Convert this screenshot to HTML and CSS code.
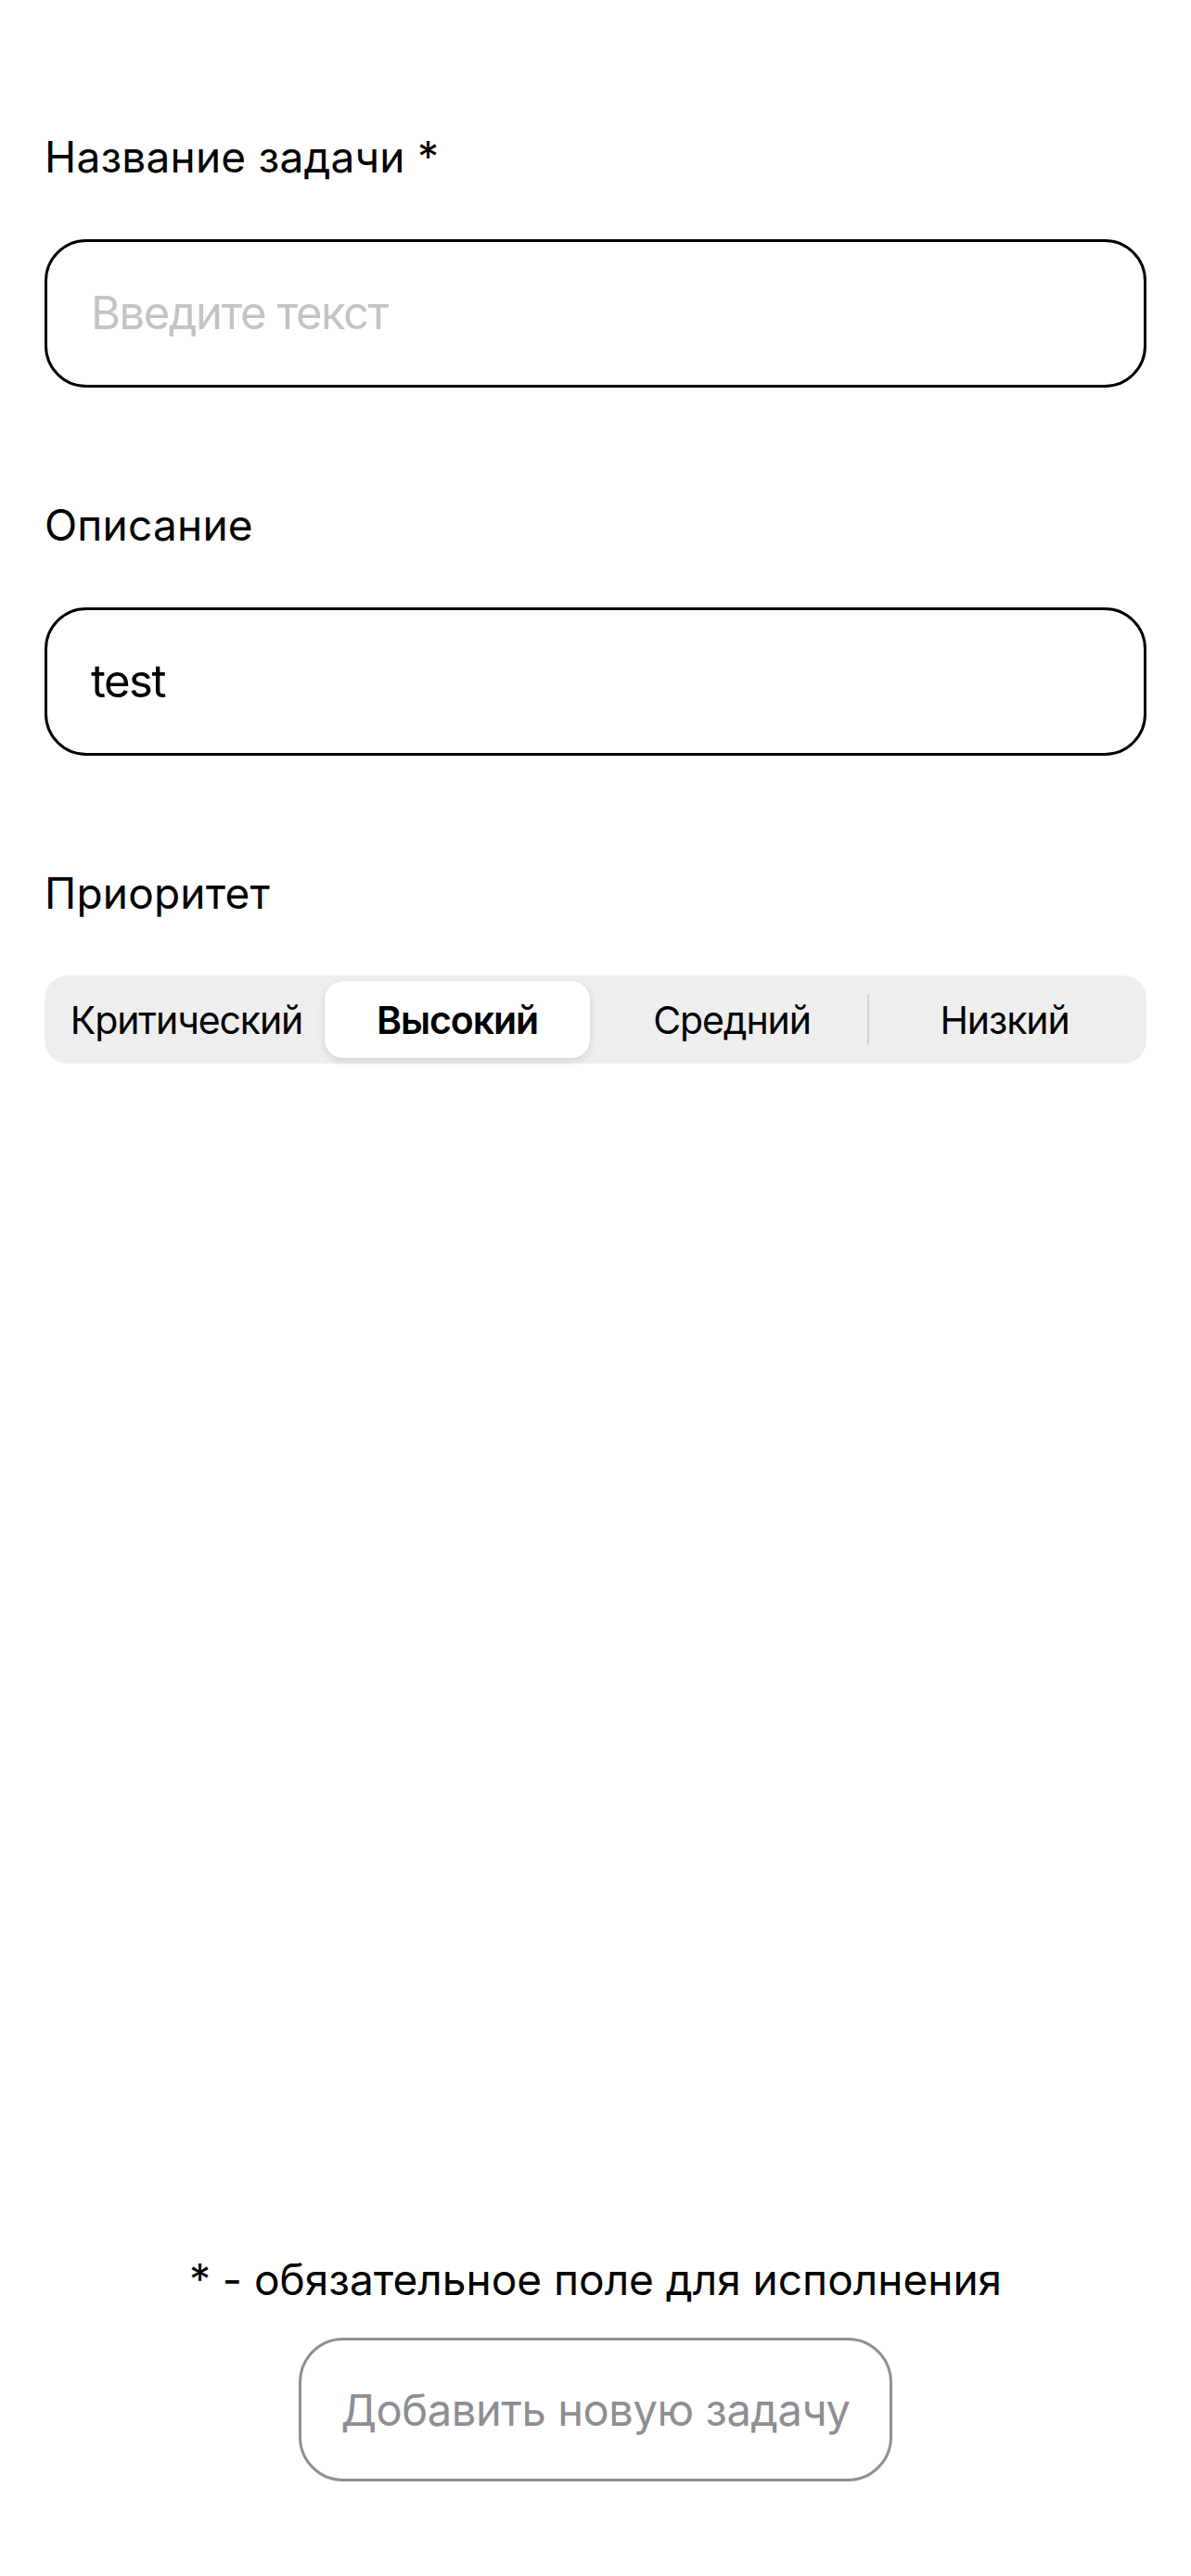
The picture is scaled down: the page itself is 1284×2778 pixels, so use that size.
FILE: index.html
```html
<!DOCTYPE html>
<html lang="ru">
<head>
<meta charset="utf-8">
<title>Новая задача</title>
<link rel="stylesheet" href="styles.css">
</head>
<body>
<main class="page">
  <form class="form">
    <div class="field">
      <label class="label" for="title">Название задачи *</label>
      <div class="input"><span class="placeholder">Введите текст</span></div>
    </div>
    <div class="field">
      <label class="label" for="desc">Описание</label>
      <div class="input"><span class="value">test</span></div>
    </div>
    <div class="field">
      <label class="label">Приоритет</label>
      <div class="segmented">
        <div class="segment">Критический</div>
        <div class="segment selected">Высокий</div>
        <div class="segment">Средний</div>
        <div class="segment sep-left">Низкий</div>
      </div>
    </div>
  </form>
  <footer class="footer">
    <p class="note">* - обязательное поле для исполнения</p>
    <div class="button">Добавить новую задачу</div>
  </footer>
</main>
</body>
</html>
```
FILE: styles.css
```css
* { box-sizing: border-box; }
html, body { margin: 0; padding: 0; background: #ffffff; }
body {
  font-family: "Inter", "Noto Sans", sans-serif;
  color: #000;
}
.page {
  min-height: 2778px;
  padding: 141px 48px 102px;
  display: flex;
  flex-direction: column;
}
.form {
  display: flex;
  flex-direction: column;
  gap: 120px;
}
.field {
  display: flex;
  flex-direction: column;
}
.label {
  font-size: 46px;
  line-height: 56px;
  letter-spacing: 0.2px;
  margin-bottom: 61px;
}
.input {
  height: 160px;
  border: 3px solid #000;
  border-radius: 45px;
  padding: 0 47px;
  display: flex;
  align-items: center;
  font-size: 49px;
  line-height: 60px;
  letter-spacing: -1.5px;
}
.placeholder { color: #c4c4c6; }
.value { color: #000; }
.segmented {
  height: 95px;
  background: #eeeeef;
  border-radius: 25px;
  padding: 6px;
  display: grid;
  grid-template-columns: repeat(4, 1fr);
  align-items: stretch;
}
.segment {
  position: relative;
  display: flex;
  align-items: center;
  justify-content: center;
  font-size: 41px;
  letter-spacing: -1.1px;
  border-radius: 20px;
}
.segment.selected {
  background: #fff;
  font-weight: 600;
  margin: 0 6px 0 2px;
  box-shadow: 0 3px 8px rgba(0, 0, 0, 0.12), 0 0 1px rgba(0, 0, 0, 0.04);
}
.segment.sep-left::before {
  content: "";
  position: absolute;
  left: -1px;
  top: 14px;
  bottom: 14px;
  width: 2px;
  background: #d3d3d6;
  border-radius: 1px;
}
.footer {
  margin-top: auto;
  display: flex;
  flex-direction: column;
  align-items: center;
}
.note {
  margin: 0 0 35px;
  font-size: 46px;
  line-height: 56px;
  letter-spacing: 0;
}
.button {
  width: 640px;
  height: 155px;
  border: 3px solid #8e8e93;
  border-radius: 48px;
  display: flex;
  align-items: center;
  justify-content: center;
  color: #8e8e93;
  font-size: 47px;
  letter-spacing: -0.4px;
}
```
